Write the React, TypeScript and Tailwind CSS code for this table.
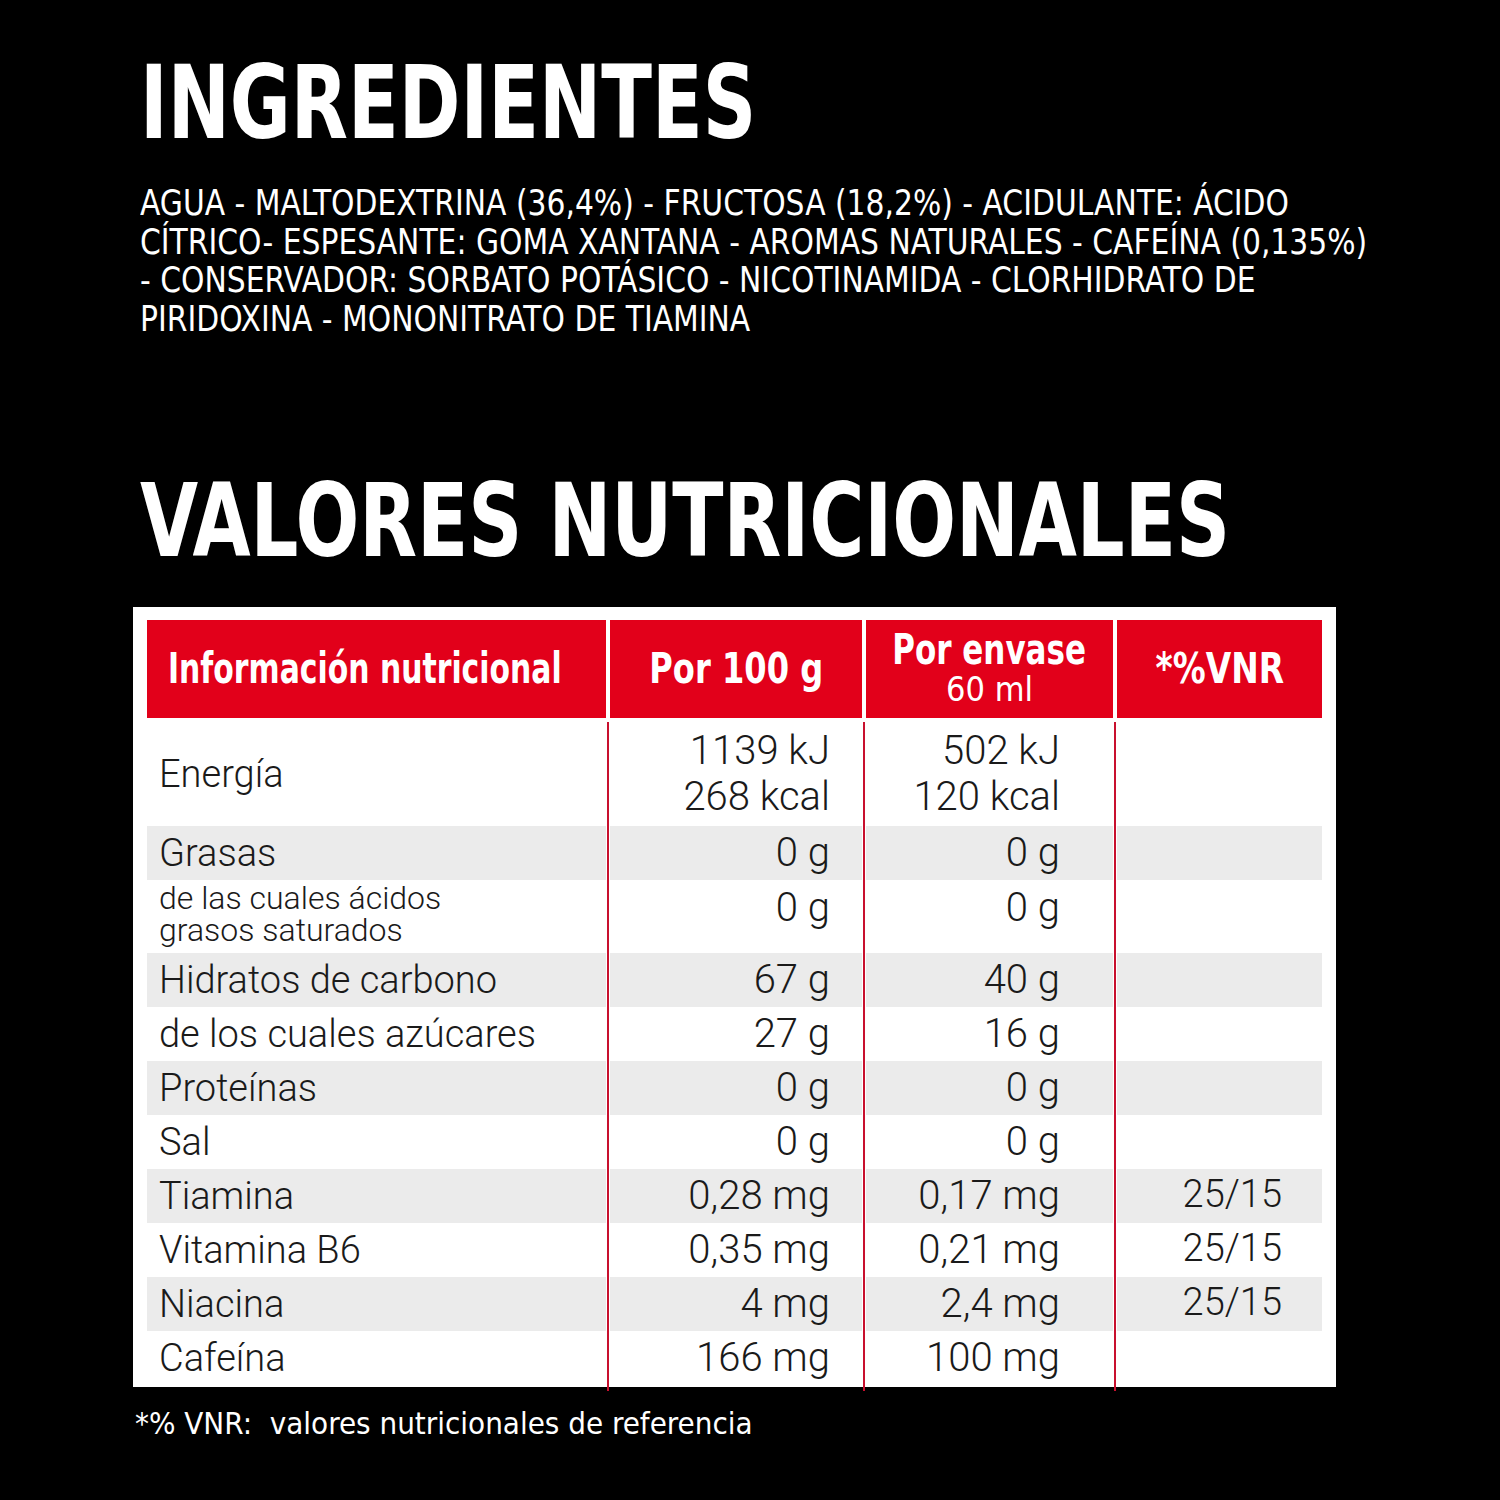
import React from "react";

const narrow = "font-['Liberation_Sans_Narrow','DejaVu_Sans_Condensed','Liberation_Sans',sans-serif]";
const light = "font-['Roboto','Liberation_Sans',sans-serif] font-light";

type Row = {
  label: React.ReactNode;
  a: React.ReactNode;
  b: React.ReactNode;
  c?: string;
  h: string;
  gray: boolean;
  small?: boolean;
};

const rows: Row[] = [
  { label: "Energía", a: <>1139 kJ<br />268 kcal</>, b: <>502 kJ<br />120 kcal</>, h: "h-[104px]", gray: false },
  { label: "Grasas", a: "0 g", b: "0 g", h: "h-[54px]", gray: true },
  { label: <>de las cuales ácidos<br />grasos saturados</>, a: "0 g", b: "0 g", h: "h-[73px]", gray: false, small: true },
  { label: "Hidratos de carbono", a: "67 g", b: "40 g", h: "h-[54px]", gray: true },
  { label: "de los cuales azúcares", a: "27 g", b: "16 g", h: "h-[54px]", gray: false },
  { label: "Proteínas", a: "0 g", b: "0 g", h: "h-[54px]", gray: true },
  { label: "Sal", a: "0 g", b: "0 g", h: "h-[54px]", gray: false },
  { label: "Tiamina", a: "0,28 mg", b: "0,17 mg", c: "25/15", h: "h-[54px]", gray: true },
  { label: "Vitamina B6", a: "0,35 mg", b: "0,21 mg", c: "25/15", h: "h-[54px]", gray: false },
  { label: "Niacina", a: "4 mg", b: "2,4 mg", c: "25/15", h: "h-[54px]", gray: true },
  { label: "Cafeína", a: "166 mg", b: "100 mg", h: "h-[54px]", gray: false },
];

function Divider() {
  return (
    <div className="w-[4px] flex justify-center mb-[-6px]">
      <div className="w-[2px] bg-[#c8102e]" />
    </div>
  );
}

export default function App() {
  return (
    <div className="w-[1500px] h-[1500px] bg-black overflow-hidden text-white">
      <div className="pl-[140px] pt-[53px]">
        <h1 className={`${narrow} font-bold text-[102px] leading-[100px] whitespace-nowrap origin-left scale-x-[0.81]`}>INGREDIENTES</h1>
        <p className={`${narrow} text-[36px] leading-[38.7px] mt-[31px] whitespace-nowrap origin-left scale-x-[0.92]`}>
          AGUA - MALTODEXTRINA (36,4%) - FRUCTOSA (18,2%) - ACIDULANTE: ÁCIDO
          <br />
          CÍTRICO- ESPESANTE: GOMA XANTANA - AROMAS NATURALES - CAFEÍNA (0,135%)
          <br />
          - CONSERVADOR: SORBATO POTÁSICO - NICOTINAMIDA - CLORHIDRATO DE
          <br />
          PIRIDOXINA - MONONITRATO DE TIAMINA
        </p>
        <h2 className={`${narrow} font-bold text-[102px] leading-[100px] mt-[132px] whitespace-nowrap origin-left scale-x-[0.818]`}>VALORES NUTRICIONALES</h2>
      </div>

      <div className="ml-[133px] mt-[36px] w-[1203px] h-[780px] bg-white pt-[13px] px-[14px]">
        {/* header */}
        <div className={`flex gap-[4px] h-[98px] ${narrow} font-bold text-white`}>
          <div className="w-[459px] bg-[#e2001a] flex items-center pl-[21px] text-[42px] leading-[50px]">
            <span className="inline-block whitespace-nowrap origin-left scale-x-[0.79]">Información nutricional</span>
          </div>
          <div className="w-[252px] bg-[#e2001a] flex items-center justify-center text-[42px] leading-[50px]">
            <span className="inline-block whitespace-nowrap scale-x-[0.85]">Por 100 g</span>
          </div>
          <div className="w-[247px] bg-[#e2001a] flex flex-col items-center justify-center pb-[4px]">
            <span className="inline-block whitespace-nowrap scale-x-[0.82] text-[42px] leading-[44px]">Por envase</span>
            <span className="text-[34px] leading-[34px] font-normal whitespace-nowrap">60 ml</span>
          </div>
          <div className="w-[205px] bg-[#e2001a] flex items-center justify-center text-[42px] leading-[50px]">
            <span className="inline-block whitespace-nowrap scale-x-[0.87]">*%VNR</span>
          </div>
        </div>

        {/* body */}
        <div className={`flex mt-[4px] text-[#1a1a1a] ${light}`}>
          <div className="w-[459px] flex flex-col">
            {rows.map((r, i) => (
              <div
                key={i}
                className={`${r.h} ${r.gray ? "bg-[#ebebeb]" : "bg-white"} flex items-center pl-[12px] whitespace-nowrap ${
                  r.small ? "text-[32px] leading-[32px] pb-[4px]" : "text-[38px] leading-[44px]"
                }`}
              >
                <span>{r.label}</span>
              </div>
            ))}
          </div>
          <Divider />
          <div className="w-[252px] flex flex-col">
            {rows.map((r, i) => (
              <div
                key={i}
                className={`${r.h} ${r.gray ? "bg-[#ebebeb]" : "bg-white"} flex justify-end pr-[32px] text-[40px] leading-[46px] whitespace-nowrap ${
                  r.small ? "items-start pt-[5px]" : "items-center"
                }`}
              >
                <span className="text-right">{r.a}</span>
              </div>
            ))}
          </div>
          <Divider />
          <div className="w-[247px] flex flex-col">
            {rows.map((r, i) => (
              <div
                key={i}
                className={`${r.h} ${r.gray ? "bg-[#ebebeb]" : "bg-white"} flex justify-end pr-[53px] text-[40px] leading-[46px] whitespace-nowrap ${
                  r.small ? "items-start pt-[5px]" : "items-center"
                }`}
              >
                <span className="text-right">{r.b}</span>
              </div>
            ))}
          </div>
          <Divider />
          <div className="w-[205px] flex flex-col">
            {rows.map((r, i) => (
              <div
                key={i}
                className={`${r.h} ${r.gray ? "bg-[#ebebeb]" : "bg-white"} flex items-center justify-end pr-[40px] pb-[4px] text-[38px] leading-[44px]`}
              >
                <span>{r.c ?? ""}</span>
              </div>
            ))}
          </div>
        </div>
      </div>

      <p className={`${narrow} text-[31px] leading-[40px] ml-[135px] mt-[16px] whitespace-nowrap`}>*% VNR:&nbsp; valores nutricionales de referencia</p>
    </div>
  );
}
